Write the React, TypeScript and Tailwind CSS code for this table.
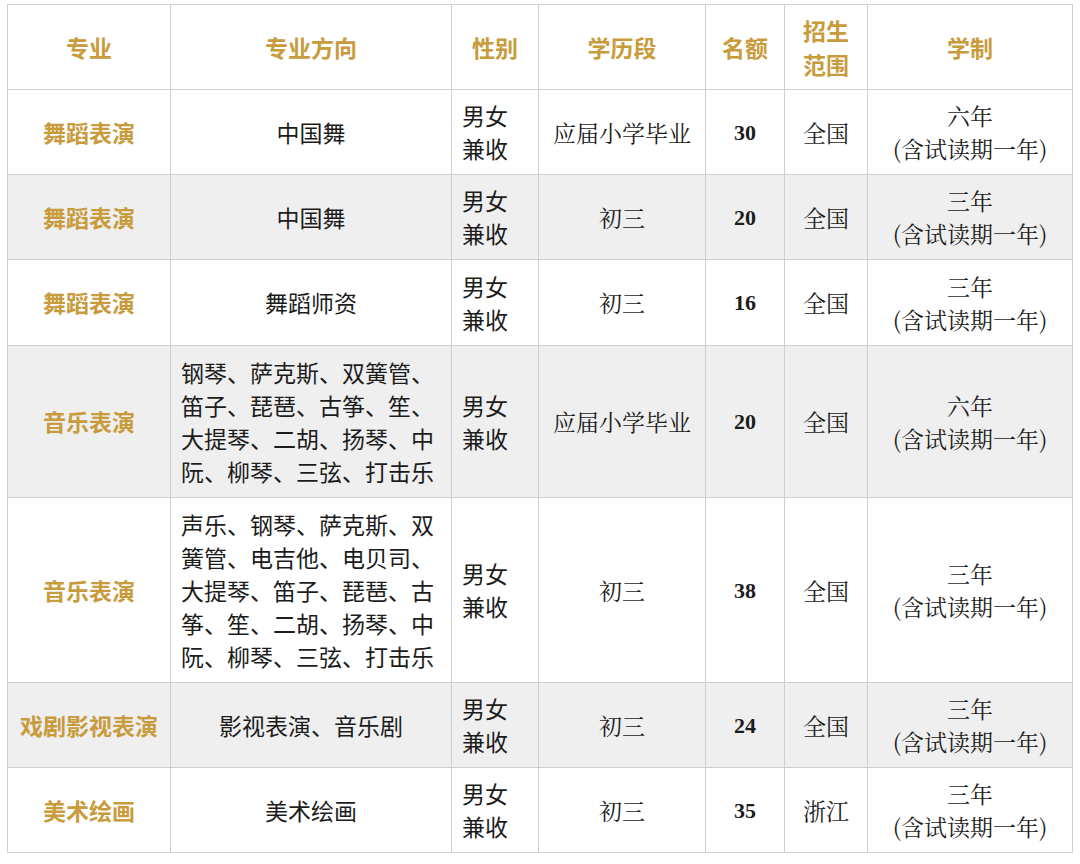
import React from 'react';

type Row = {
  major: string;
  direction: string[];
  left?: boolean;
  level: string;
  quota: string;
  scope: string;
  years: string;
};

const rows: Row[] = [
  { major: '舞蹈表演', direction: ['中国舞'], level: '应届小学毕业', quota: '30', scope: '全国', years: '六年' },
  { major: '舞蹈表演', direction: ['中国舞'], level: '初三', quota: '20', scope: '全国', years: '三年' },
  { major: '舞蹈表演', direction: ['舞蹈师资'], level: '初三', quota: '16', scope: '全国', years: '三年' },
  {
    major: '音乐表演',
    direction: ['钢琴、萨克斯、双簧管、', '笛子、琵琶、古筝、笙、', '大提琴、二胡、扬琴、中', '阮、柳琴、三弦、打击乐'],
    left: true,
    level: '应届小学毕业',
    quota: '20',
    scope: '全国',
    years: '六年',
  },
  {
    major: '音乐表演',
    direction: ['声乐、钢琴、萨克斯、双', '簧管、电吉他、电贝司、', '大提琴、笛子、琵琶、古', '筝、笙、二胡、扬琴、中', '阮、柳琴、三弦、打击乐'],
    left: true,
    level: '初三',
    quota: '38',
    scope: '全国',
    years: '三年',
  },
  { major: '戏剧影视表演', direction: ['影视表演、音乐剧'], level: '初三', quota: '24', scope: '全国', years: '三年' },
  { major: '美术绘画', direction: ['美术绘画'], level: '初三', quota: '35', scope: '浙江', years: '三年' },
];

const heights = ['h-[85px]', 'h-[85px]', 'h-[86px]', 'h-[152px]', 'h-[185px]', 'h-[85px]', 'h-[85px]'];

const sans = "font-['Noto_Sans_CJK_SC',sans-serif]";
const serif = "font-['Noto_Serif_CJK_SC','Liberation_Serif','Noto_Sans_CJK_SC',serif]";
const cell = 'border border-[#cfcfcf] align-middle';

export default function App() {
  return (
    <div className="min-h-[864px] w-[1080px] bg-white pt-[4px] pl-[7px]">
      <table className="w-[1065px] table-fixed border-collapse text-[23px] leading-[33px] text-[#1c1c1c]">
        <colgroup>
          <col className="w-[163px]" />
          <col className="w-[281px]" />
          <col className="w-[87px]" />
          <col className="w-[167px]" />
          <col className="w-[79px]" />
          <col className="w-[83px]" />
          <col className="w-[205px]" />
        </colgroup>
        <thead>
          <tr className={`h-[85px] text-[#c89b3c] font-bold ${sans}`}>
            <th className={cell}>专业</th>
            <th className={cell}>专业方向</th>
            <th className={cell}>性别</th>
            <th className={cell}>学历段</th>
            <th className={cell}>名额</th>
            <th className={`${cell} leading-[34px]`}>
              招生
              <br />
              范围
            </th>
            <th className={cell}>学制</th>
          </tr>
        </thead>
        <tbody>
          {rows.map((r, i) => (
            <tr key={i} className={`${heights[i]} ${i % 2 === 1 ? 'bg-[#efefef]' : 'bg-white'}`}>
              <td className={`${cell} text-center font-bold text-[#c89b3c] ${sans}`}>{r.major}</td>
              <td className={`${cell} px-[10px] ${r.left ? 'text-left' : 'text-center'} ${sans}`}>
                {r.direction.map((line) => (
                  <div key={line} className="whitespace-nowrap">
                    {line}
                  </div>
                ))}
              </td>
              <td className={`${cell} px-[10px] text-left ${sans}`}>
                <div>男女</div>
                <div>兼收</div>
              </td>
              <td className={`${cell} text-center ${serif}`}>{r.level}</td>
              <td className={`${cell} text-center font-bold text-[22px] font-['Liberation_Serif',serif]`}>{r.quota}</td>
              <td className={`${cell} text-center ${serif}`}>{r.scope}</td>
              <td className={`${cell} text-center ${serif}`}>
                <div>{r.years}</div>
                <div>(含试读期一年)</div>
              </td>
            </tr>
          ))}
        </tbody>
      </table>
    </div>
  );
}
